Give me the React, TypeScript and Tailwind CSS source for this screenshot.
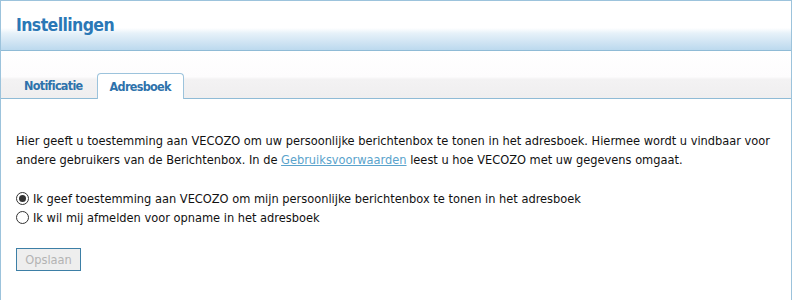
import { useState } from 'react';

export default function App() {
  const [choice, setChoice] = useState<'ja' | 'nee'>('ja');
  const [tab, setTab] = useState<'notificatie' | 'adresboek'>('adresboek');

  return (
    <div className="h-[300px] w-[792px] overflow-hidden bg-white font-['DejaVu_Sans_Condensed',Tahoma,sans-serif] text-[12.7px] text-[#111]">
      <div className="h-full border-x border-t border-[#9cc3dc]">
        <div className="h-[50px] border-b border-[#8fbbd6] bg-[linear-gradient(to_bottom,#ffffff_0%,#ffffff_55%,#e6f1f9_66%,#bcd9ee_100%)] px-[15px] pt-[11px]">
          <h1 className="text-[17.5px] font-bold leading-[26px] tracking-[-0.6px] text-[#2b78b6]">Instellingen</h1>
        </div>

        <div className="flex h-[48px] items-end border-b border-[#8fbbd6] bg-[linear-gradient(to_bottom,#ffffff_0%,#fdfcfd_55%,#f3f2f3_60%,#efeeef_100%)] pl-[8px] text-[12.5px] tracking-[-0.7px]">
          <button
            onClick={() => setTab('notificatie')}
            className="h-[24px] pl-[15px] pr-[14px] font-bold text-[#2e72ab]"
          >
            Notificatie
          </button>
          <button
            onClick={() => setTab('adresboek')}
            className={`-mb-px h-[26px] rounded-t-[4px] border border-b-0 border-[#9cc3dc] px-[12px] pt-[2px] font-bold text-[#2e72ab] ${tab === 'adresboek' ? 'bg-white' : 'bg-white'}`}
          >
            Adresboek
          </button>
        </div>

        <div className="px-[15px] pt-[32px]">
          <p className="leading-[19px]">
            Hier geeft u toestemming aan VECOZO om uw persoonlijke berichtenbox te tonen in het adresboek. Hiermee wordt u vindbaar voor
            andere gebruikers van de Berichtenbox. In de{' '}
            <a href="#" className="text-[#5aa3cc] underline">Gebruiksvoorwaarden</a> leest u hoe VECOZO met uw gegevens omgaat.
          </p>

          <div className="mt-[20px] flex flex-col">
            <label className="flex h-[19px] items-center gap-[4px]">
              <Radio checked={choice === 'ja'} onChange={() => setChoice('ja')} />
              Ik geef toestemming aan VECOZO om mijn persoonlijke berichtenbox te tonen in het adresboek
            </label>
            <label className="flex h-[19px] items-center gap-[4px]">
              <Radio checked={choice === 'nee'} onChange={() => setChoice('nee')} />
              Ik wil mij afmelden voor opname in het adresboek
            </label>
          </div>

          <button disabled className="mt-[21px] h-[23px] w-[65px] border border-[#3d7fa6] bg-[#eeeeee] text-[#b3b3b3]">
            Opslaan
          </button>
        </div>
      </div>
    </div>
  );
}

function Radio({ checked, onChange }: { checked: boolean; onChange: () => void }) {
  return (
    <span className="relative flex h-[13px] w-[13px] items-center justify-center rounded-full border border-[#333] bg-white" onClick={onChange}>
      {checked && <span className="h-[7px] w-[7px] rounded-full bg-[#333]" />}
    </span>
  );
}
